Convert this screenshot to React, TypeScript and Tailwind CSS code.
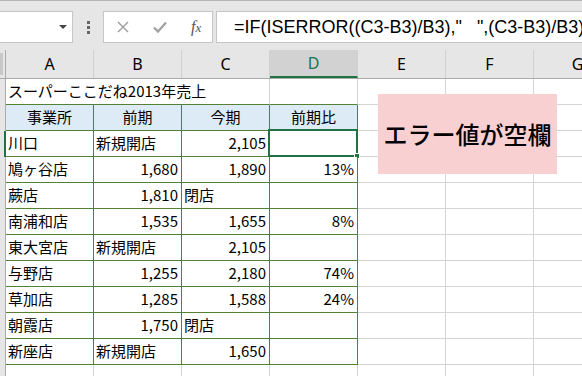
import React from 'react';

type Cell = { text?: string; align?: 'left' | 'right' | 'center' };

const JP = { fontFamily: '"Noto Sans CJK JP", "Noto Sans", sans-serif' };

const cols = ['A', 'B', 'C', 'D', 'E', 'F', 'G'];

const tableRows: Cell[][] = [
  [{ text: '事業所', align: 'center' }, { text: '前期', align: 'center' }, { text: '今期', align: 'center' }, { text: '前期比', align: 'center' }],
  [{ text: '川口' }, { text: '新規開店' }, { text: '2,105', align: 'right' }, {}],
  [{ text: '鳩ヶ谷店' }, { text: '1,680', align: 'right' }, { text: '1,890', align: 'right' }, { text: '13%', align: 'right' }],
  [{ text: '蕨店' }, { text: '1,810', align: 'right' }, { text: '閉店' }, {}],
  [{ text: '南浦和店' }, { text: '1,535', align: 'right' }, { text: '1,655', align: 'right' }, { text: '8%', align: 'right' }],
  [{ text: '東大宮店' }, { text: '新規開店' }, { text: '2,105', align: 'right' }, {}],
  [{ text: '与野店' }, { text: '1,255', align: 'right' }, { text: '2,180', align: 'right' }, { text: '74%', align: 'right' }],
  [{ text: '草加店' }, { text: '1,285', align: 'right' }, { text: '1,588', align: 'right' }, { text: '24%', align: 'right' }],
  [{ text: '朝霞店' }, { text: '1,750', align: 'right' }, { text: '閉店' }, {}],
  [{ text: '新座店' }, { text: '新規開店' }, { text: '1,650', align: 'right' }, {}],
];

const alignClass = (a?: string) =>
  a === 'right' ? 'justify-end pr-[3px]' : a === 'center' ? 'justify-center' : 'justify-start pl-[2px]';

const FormulaBar = () => (
  <div className="h-[50px] bg-[#e6e6e6] border-t border-[#b5b5b5] flex items-start pt-[10px]">
    <div className="w-[73px] h-[32px] bg-white border border-[#c6c6c6] border-l-0 flex items-center justify-end pr-[5px]">
      <svg width="8" height="5" viewBox="0 0 8 5">
        <path d="M0 0h8L4 4z" fill="#444" />
      </svg>
    </div>
    <div className="w-[30px] h-[32px] flex flex-col items-center justify-center gap-[2px]">
      <span className="w-[3px] h-[3px] bg-[#666]" />
      <span className="w-[3px] h-[3px] bg-[#666]" />
      <span className="w-[3px] h-[3px] bg-[#666]" />
    </div>
    <div className="w-[110px] h-[32px] bg-white border border-[#c6c6c6] flex items-center">
      <svg className="ml-[13px]" width="12" height="12" viewBox="0 0 12 12">
        <path d="M1 1l10 10M11 1L1 11" stroke="#9c9c9c" strokeWidth="1.4" />
      </svg>
      <svg className="ml-[24px]" width="14" height="12" viewBox="0 0 14 12">
        <path d="M1 6.5l4 4L13 1.5" stroke="#a3a3a3" strokeWidth="2.4" fill="none" />
      </svg>
      <span
        className="ml-[24px] text-[16px] italic text-[#555] leading-none"
        style={{ fontFamily: '"Liberation Serif", serif' }}
      >
        f<span className="text-[13px]">x</span>
      </span>
    </div>
    <div className="ml-[3px] flex-1 h-[32px] bg-white border border-[#c6c6c6] border-r-0 flex items-center overflow-hidden">
      <span
        className="pl-[17px] text-[18px] text-black whitespace-pre"
        style={{ fontFamily: '"Liberation Sans", Arial, sans-serif' }}
      >
        =IF(ISERROR((C3-B3)/B3),"   ",(C3-B3)/B3)
      </span>
    </div>
  </div>
);

const ColumnHeader = () => (
  <div className="h-[29px] flex bg-[#e6e6e6] border-b border-[#ababab]" style={{ fontFamily: '"Noto Sans", sans-serif' }}>
    <div className="w-[6px] shrink-0 border-r border-[#ababab] flex items-center">
      <div className="w-[3px] h-[22px] bg-[#c8c8c8]" />
    </div>
    {cols.map((c) => (
      <div
        key={c}
        className={`w-[88px] shrink-0 flex items-center justify-center text-[16px] border-r border-[#d0d0d0] ${
          c === 'D' ? 'bg-[#d2d2d2] text-[#217346] border-b-2 border-b-[#217346]' : 'text-black'
        }`}
      >
        {c}
      </div>
    ))}
  </div>
);

const EmptyCells = () => (
  <>
    <div className="w-[88px] shrink-0 border-r border-b border-[#d4d4d4]" />
    <div className="w-[88px] shrink-0 border-r border-b border-[#d4d4d4]" />
    <div className="w-[88px] shrink-0 border-b border-[#d4d4d4]" />
  </>
);

export default function App() {
  return (
    <div className="w-[582px] h-[376px] overflow-hidden bg-white relative" style={JP}>
      <FormulaBar />
      <ColumnHeader />

      {/* title row */}
      <div className="h-[26px] flex">
        <div className="w-[6px] shrink-0 bg-[#e6e6e6] border-r border-[#ababab]" />
        <div className="w-[264px] shrink-0 flex items-center pl-[2px] text-[15px] text-black whitespace-nowrap border-r border-r-[#d4d4d4] border-b border-b-[#548235]">
          スーパーここだね2013年売上
        </div>
        <div className="w-[88px] shrink-0 border-r border-r-[#d4d4d4] border-b border-b-[#548235]" />
        <EmptyCells />
      </div>

      {tableRows.map((row, ri) => (
        <div key={ri} className="h-[26px] flex">
          <div
            className={`w-[6px] shrink-0 bg-[#e6e6e6] ${
              ri === 1 ? 'border-r-2 border-[#217346]' : 'border-r border-[#ababab]'
            }`}
          />
          {row.map((cell, ci) => (
            <div
              key={ci}
              className={`relative w-[88px] shrink-0 flex items-center border-r border-b border-[#548235] text-[15px] text-black whitespace-nowrap ${alignClass(
                cell.align
              )} ${ri === 0 ? 'bg-[#ddebf7]' : 'bg-white'}`}
            >
              {cell.text}
              {ri === 1 && ci === 3 && (
                <div className="absolute left-[-2px] top-[-2px] w-[90px] h-[28px] border-2 border-[#217346]">
                  <div className="absolute right-[-4px] bottom-[-4px] w-[6px] h-[6px] bg-[#217346] border border-white" />
                </div>
              )}
            </div>
          ))}
          <EmptyCells />
        </div>
      ))}

      <div className="h-[26px] flex">
        <div className="w-[6px] shrink-0 bg-[#e6e6e6] border-r border-[#ababab]" />
        {cols.map((c) => (
          <div key={c} className="w-[88px] shrink-0 border-r border-[#d4d4d4]" />
        ))}
      </div>

      {/* shape over the grid */}
      <div className="absolute left-[378px] top-[94px] w-[179px] h-[80px] bg-[#f8d0d2] flex items-center justify-center text-[24px] font-medium text-black">
        エラー値が空欄
      </div>
    </div>
  );
}
